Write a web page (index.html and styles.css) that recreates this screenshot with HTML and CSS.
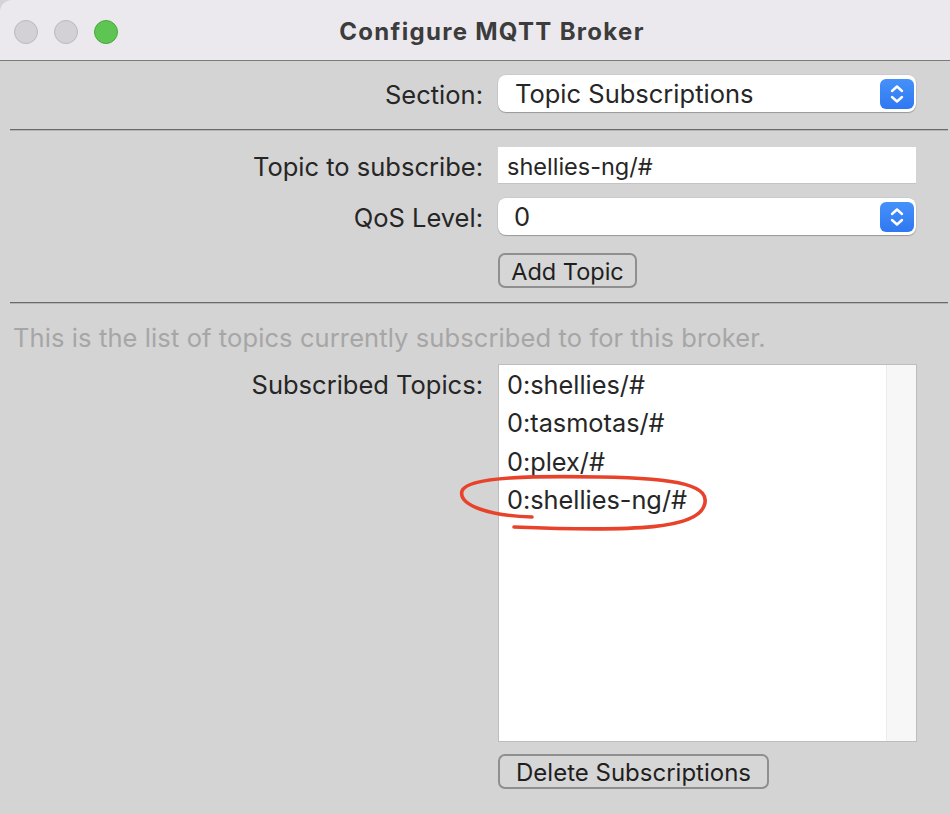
FILE: index.html
```html
<!DOCTYPE html>
<html lang="en">

<head>
    <meta charset="UTF-8">
    <meta name="viewport" content="width=device-width, initial-scale=1.0">
    <title>Configure MQTT Broker</title>
    <link rel="stylesheet" href="styles.css">
</head>

<body>
    <div class="window">
        <div class="titlebar">
            <div class="lights">
                <span class="light"></span>
                <span class="light"></span>
                <span class="light green"></span>
            </div>
            <h1 class="title">Configure MQTT Broker</h1>
        </div>

        <div class="content">
            <div class="row row-section">
                <label class="label">Section:</label>
                <div class="select">
                    <span class="select-text">Topic Subscriptions</span>
                    <span class="stepper">
                        <svg width="16" height="22" viewBox="0 0 16 22">
                            <path d="M3 8 L8 3.5 L13 8 M3 14 L8 18.5 L13 14" fill="none" stroke="#fff" stroke-width="2.4" stroke-linecap="round" stroke-linejoin="round"/>
                        </svg>
                    </span>
                </div>
            </div>

            <div class="sep"></div>

            <div class="row row-topic">
                <label class="label">Topic to subscribe:</label>
                <div class="input">shellies-ng/#</div>
            </div>

            <div class="row row-qos">
                <label class="label">QoS Level:</label>
                <div class="select">
                    <span class="select-text">0</span>
                    <span class="stepper">
                        <svg width="16" height="22" viewBox="0 0 16 22">
                            <path d="M3 8 L8 3.5 L13 8 M3 14 L8 18.5 L13 14" fill="none" stroke="#fff" stroke-width="2.4" stroke-linecap="round" stroke-linejoin="round"/>
                        </svg>
                    </span>
                </div>
            </div>

            <div class="row row-add">
                <span class="label"></span>
                <div><button class="btn btn-add">Add Topic</button></div>
            </div>

            <div class="sep sep-second"></div>

            <p class="hint">This is the list of topics currently subscribed to for this broker.</p>

            <div class="row row-list">
                <label class="label list-label">Subscribed Topics:</label>
                <div class="list">
                    <ul class="items">
                        <li>0:shellies/#</li>
                        <li>0:tasmotas/#</li>
                        <li>0:plex/#</li>
                        <li>0:shellies-ng/#</li>
                    </ul>
                    <div class="track"></div>
                </div>
            </div>

            <div class="row row-delete">
                <span class="label"></span>
                <div><button class="btn btn-delete">Delete Subscriptions</button></div>
            </div>
        </div>

        <!-- red hand-drawn circle over the new topic -->
        <svg class="annotation" width="950" height="814" viewBox="0 0 950 814">
            <path d="M532 517 C 492 516, 458 506, 462 491 C 467 476, 540 476, 600 477 C 680 478, 712 486, 704 506 C 696 528, 640 532, 514 527" fill="none" stroke="#e8422b" stroke-width="3.6" stroke-linecap="round"/>
        </svg>
    </div>
</body>

</html>
```

FILE: styles.css
```css
*{
    box-sizing: border-box;
    padding: 0;
    margin: 0;
}

body{
    background-color: #d4d4d4;
    font-family: Inter, "Liberation Sans", sans-serif;
    color: #262626;
}

.window{
    position: relative;
    width: 950px;
    height: 814px;
    overflow: hidden;
    background-color: #d4d4d4;
}

.titlebar{
    position: relative;
    height: 61px;
    background-color: #ebe9ee;
    border-bottom: 1px solid #7a7a7a;
    border-top-left-radius: 12px;
    display: flex;
    align-items: center;
    justify-content: center;
}

.lights{
    position: absolute;
    left: 14px;
    top: 20px;
    display: flex;
    gap: 16px;
}

.light{
    width: 24px;
    height: 24px;
    border-radius: 50%;
    background-color: #d3d1d6;
    border: 1px solid #bbb9bd;
}

.light.green{
    background-color: #5ec553;
    border-color: #4aa83f;
}

.title{
    font-size: 24px;
    font-weight: 700;
    letter-spacing: 1.3px;
    color: #3c3c3c;
    margin-left: 34px;
    margin-top: 3px;
}

.content{
    padding: 14px 2px 0 10px;
}

.row{
    display: grid;
    grid-template-columns: 473px 418px;
    column-gap: 15px;
    align-items: center;
}

.label{
    text-align: right;
    font-size: 25.5px;
    padding-top: 2px;
}

.select{
    height: 37px;
    background-color: #fff;
    border-radius: 8px;
    box-shadow: 0 1px 1px rgba(0, 0, 0, 0.25), 0 0 0 0.5px rgba(0, 0, 0, 0.08);
    display: flex;
    align-items: center;
    justify-content: space-between;
    padding: 0 2px 0 17px;
    font-size: 25.5px;
}

.row-qos .select{
    padding-left: 16px;
}

.stepper{
    width: 34px;
    height: 30px;
    border-radius: 6px;
    background: linear-gradient(#4591fa, #2f78f1);
    display: flex;
    align-items: center;
    justify-content: center;
}

.sep{
    height: 2px;
    border-top: 1px solid #6a6a6a;
    border-bottom: 1px solid #b4b4b4;
    margin: 17px 0 16px 0;
}

.row-topic{
    margin-bottom: 14px;
}

.input{
    height: 37px;
    background-color: #fff;
    border-bottom: 1px solid #c4c4c4;
    padding: 3px 0 0 9px;
    font-size: 23.5px;
    display: flex;
    align-items: center;
}

.row-qos{
    margin-bottom: 18px;
}

.btn{
    font-family: Inter, "Liberation Sans", sans-serif;
    font-size: 23.5px;
    color: #1f1f1f;
    background-color: #d6d6d6;
    border: 2px solid #8f8f8f;
    border-radius: 7px;
    height: 35px;
    padding: 2px 0 0 0;
}

.btn-add{
    width: 139px;
}

.btn-delete{
    width: 271px;
    font-size: 24px;
}

.sep-second{
    margin: 14px 0 0 0;
}

.hint{
    color: #a6a6a6;
    font-size: 25.5px;
    letter-spacing: 0.1px;
    height: 60px;
    line-height: 52px;
    padding: 8px 0 0 3px;
}

.row-list{
    align-items: start;
}

.list-label{
    margin-top: 3px;
}

.list{
    height: 378px;
    width: 419px;
    background-color: #fff;
    border: 1px solid #bdbdbd;
    display: flex;
}

.items{
    list-style: none;
    flex: 1;
    padding: 1px 0 0 8px;
    font-size: 25.3px;
}

.items li{
    height: 38.3px;
    line-height: 38.3px;
}

.track{
    width: 30px;
    background-color: #f7f7f7;
    border-left: 1px solid #ececec;
}

.row-delete{
    margin-top: 12px;
}

.annotation{
    position: absolute;
    left: 0;
    top: 0;
    pointer-events: none;
}
```
